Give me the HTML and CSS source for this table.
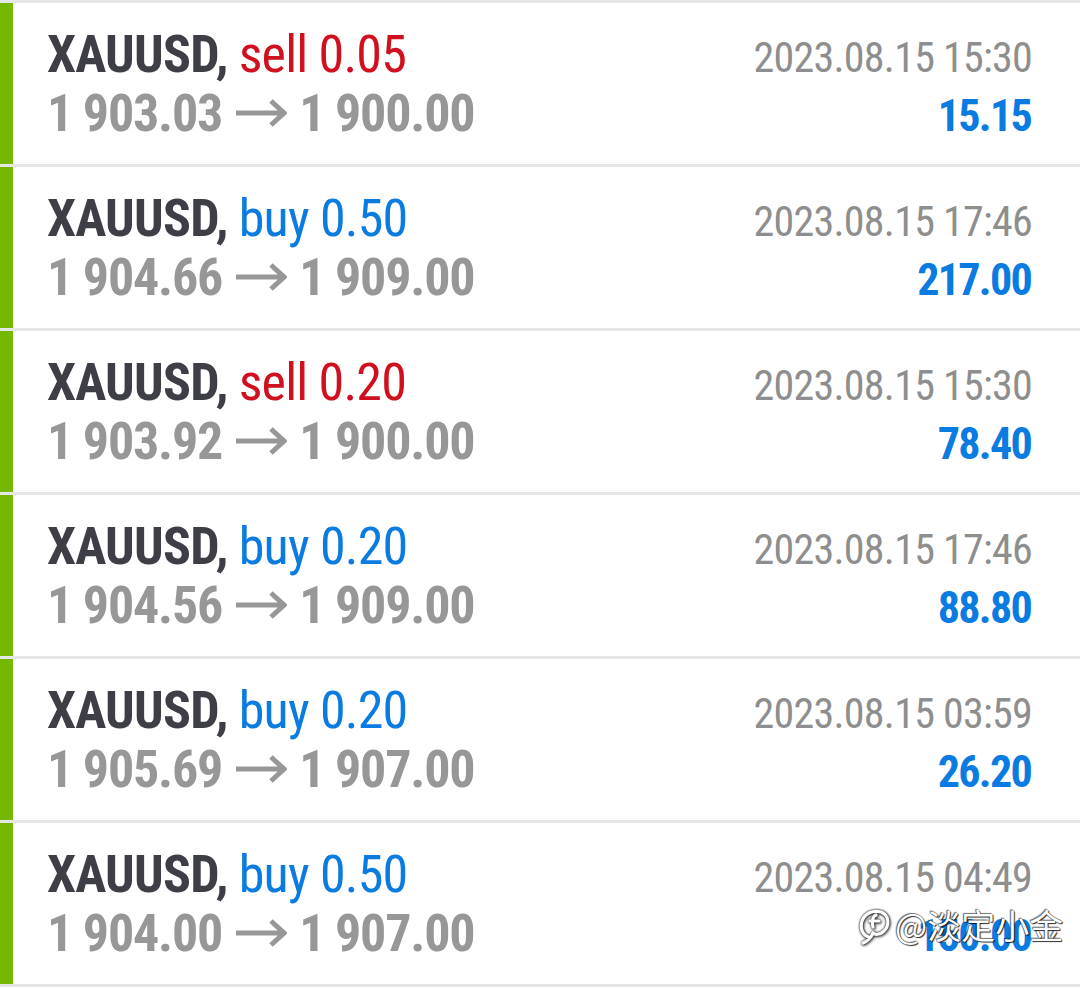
FILE: index.html
```html
<!DOCTYPE html>
<html>
<head>
<meta charset="utf-8">
<link rel="stylesheet" href="styles.css">
</head>
<body>
<div class="list">
  <div class="row">
    <div class="title"><span class="sym">XAUUSD,</span> <span class="sell">sell 0.05</span></div>
    <div class="date">2023.08.15 15:30</div>
    <div class="prices"><span>1 903.03</span><svg class="arrow" width="52" height="28" viewBox="0 0 52 28"><path d="M1 14 H48 M36 2 L49 14 L36 26" fill="none" stroke="#979797" stroke-width="5"/></svg><span>1 900.00</span></div>
    <div class="profit">15.15</div>
  </div>
  <div class="row">
    <div class="title"><span class="sym">XAUUSD,</span> <span class="buy">buy 0.50</span></div>
    <div class="date">2023.08.15 17:46</div>
    <div class="prices"><span>1 904.66</span><svg class="arrow" width="52" height="28" viewBox="0 0 52 28"><path d="M1 14 H48 M36 2 L49 14 L36 26" fill="none" stroke="#979797" stroke-width="5"/></svg><span>1 909.00</span></div>
    <div class="profit">217.00</div>
  </div>
  <div class="row">
    <div class="title"><span class="sym">XAUUSD,</span> <span class="sell">sell 0.20</span></div>
    <div class="date">2023.08.15 15:30</div>
    <div class="prices"><span>1 903.92</span><svg class="arrow" width="52" height="28" viewBox="0 0 52 28"><path d="M1 14 H48 M36 2 L49 14 L36 26" fill="none" stroke="#979797" stroke-width="5"/></svg><span>1 900.00</span></div>
    <div class="profit">78.40</div>
  </div>
  <div class="row">
    <div class="title"><span class="sym">XAUUSD,</span> <span class="buy">buy 0.20</span></div>
    <div class="date">2023.08.15 17:46</div>
    <div class="prices"><span>1 904.56</span><svg class="arrow" width="52" height="28" viewBox="0 0 52 28"><path d="M1 14 H48 M36 2 L49 14 L36 26" fill="none" stroke="#979797" stroke-width="5"/></svg><span>1 909.00</span></div>
    <div class="profit">88.80</div>
  </div>
  <div class="row">
    <div class="title"><span class="sym">XAUUSD,</span> <span class="buy">buy 0.20</span></div>
    <div class="date">2023.08.15 03:59</div>
    <div class="prices"><span>1 905.69</span><svg class="arrow" width="52" height="28" viewBox="0 0 52 28"><path d="M1 14 H48 M36 2 L49 14 L36 26" fill="none" stroke="#979797" stroke-width="5"/></svg><span>1 907.00</span></div>
    <div class="profit">26.20</div>
  </div>
  <div class="row">
    <div class="title"><span class="sym">XAUUSD,</span> <span class="buy">buy 0.50</span></div>
    <div class="date">2023.08.15 04:49</div>
    <div class="prices"><span>1 904.00</span><svg class="arrow" width="52" height="28" viewBox="0 0 52 28"><path d="M1 14 H48 M36 2 L49 14 L36 26" fill="none" stroke="#979797" stroke-width="5"/></svg><span>1 907.00</span></div>
    <div class="profit">150.00</div>
    <div class="watermark">
      <svg class="wm-icon" width="34" height="40" viewBox="0 0 34 40"><path d="M11 32 C4 30 2 23 4 16 C7 8 15 5 23 7 C31 10 32 20 26 26 C22 30 17 30 15 28 M15 28 C13 33 10 36 5 38 M18 10 C14 12 14 17 15 22 M12 16 L21 16" fill="none" stroke="#fff" stroke-width="3.2" stroke-linecap="round"/></svg>
      <span class="wm-text">@淡定小金</span>
    </div>
  </div>
</div>
</body>
</html>
```

FILE: styles.css
```css
html, body {
  margin: 0;
  padding: 0;
  background: #ffffff;
}
body {
  width: 1080px;
  height: 988px;
  overflow: hidden;
  font-family: Roboto, "Liberation Sans", sans-serif;
}
.list {
  border-top: 3px solid #e6e6e6;
}
.row {
  position: relative;
  box-sizing: border-box;
  height: 164px;
  border-bottom: 3px solid #e6e6e6;
  display: grid;
  grid-template-columns: 1fr auto;
  grid-template-rows: 59px 59px;
  align-items: baseline;
  padding: 22px 48px 0 47px;
  font-stretch: condensed;
}
.row::before {
  content: "";
  position: absolute;
  left: 0;
  top: 0;
  bottom: 0;
  width: 13px;
  background: #74b800;
}
.title {
  font-size: 52px;
  line-height: 59px;
  letter-spacing: -0.8px;
  white-space: nowrap;
}
.sym {
  color: #3e3e46;
  font-weight: 700;
}
.sell {
  color: #d0101e;
}
.buy {
  color: #0a7be0;
}
.prices {
  font-size: 52px;
  line-height: 59px;
  font-weight: 700;
  letter-spacing: -1.2px;
  color: #979797;
  white-space: nowrap;
}
.arrow {
  margin: 0 12px 0 13px;
  vertical-align: 4px;
}
.date {
  font-size: 42px;
  line-height: 59px;
  letter-spacing: -0.75px;
  color: #8e8e8e;
  text-align: right;
  white-space: nowrap;
}
.profit {
  font-size: 44px;
  line-height: 59px;
  font-weight: 700;
  letter-spacing: -1.7px;
  color: #0a7be0;
  text-align: right;
  white-space: nowrap;
  margin-right: 1px;
}
.watermark {
  position: absolute;
  left: 858px;
  top: 82px;
  display: flex;
  align-items: center;
  gap: 3px;
}
.wm-icon {
  filter: drop-shadow(0 0 1px #000) drop-shadow(1px 1px 1px rgba(0,0,0,0.6));
}
.wm-text {
  font-family: "Noto Sans CJK SC", sans-serif;
  font-size: 34px;
  line-height: 40px;
  color: #ffffff;
  text-shadow: 0 0 1px #000, 1px 1px 1px rgba(0,0,0,0.8), -1px -1px 1px rgba(0,0,0,0.5);
}
```
